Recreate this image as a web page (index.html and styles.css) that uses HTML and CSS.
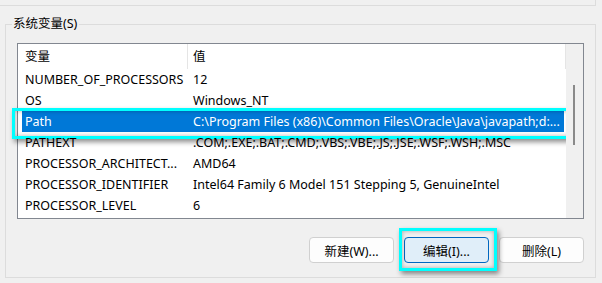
FILE: index.html
```html
<!DOCTYPE html>
<html lang="zh-CN">
<head>
  <meta charset="UTF-8" />
  <title>系统变量</title>
  <link rel="stylesheet" href="styles.css">
</head>
<body>

  <div class="top-panel"></div>

  <div class="group">
    <div class="group-title"><span>系统变量(S)</span></div>

    <div class="group-body">
      <div class="list">
        <div class="list-body">
          <div class="list-head">
            <span class="col-name">变量</span>
            <span class="col-value">值</span>
          </div>
          <div class="row"><span class="col-name">NUMBER_OF_PROCESSORS</span><span class="col-value">12</span></div>
          <div class="row"><span class="col-name">OS</span><span class="col-value">Windows_NT</span></div>
          <div class="row selected">
            <span class="col-name">Path</span><span class="col-value">C:\Program Files (x86)\Common Files\Oracle\Java\javapath;d:...</span>
            <span class="ring row-ring"></span>
          </div>
          <div class="row"><span class="col-name">PATHEXT</span><span class="col-value">.COM;.EXE;.BAT;.CMD;.VBS;.VBE;.JS;.JSE;.WSF;.WSH;.MSC</span></div>
          <div class="row"><span class="col-name">PROCESSOR_ARCHITECT...</span><span class="col-value">AMD64</span></div>
          <div class="row"><span class="col-name">PROCESSOR_IDENTIFIER</span><span class="col-value">Intel64 Family 6 Model 151 Stepping 5, GenuineIntel</span></div>
          <div class="row"><span class="col-name">PROCESSOR_LEVEL</span><span class="col-value">6</span></div>
        </div>
        <div class="scrollbar">
          <div class="thumb"></div>
        </div>
      </div>

      <div class="buttons">
        <button class="btn">新建(W)...</button>
        <span class="btn-wrap">
          <button class="btn default">编辑(I)...</button>
          <span class="ring btn-ring"></span>
        </span>
        <button class="btn">删除(L)</button>
      </div>
    </div>
  </div>

</body>
</html>
```

FILE: styles.css
```css
body {
  margin: 0;
  background: #f0f0f0;
  font-family: "Noto Sans", "Noto Sans CJK SC", sans-serif;
  font-size: 12.5px;
  color: #000;
}
.top-panel {
  width: 595px;
  height: 5px;
  border-bottom: 1px solid #dcdcdc;
  border-right: 1px solid #dcdcdc;
}
.group {
  margin: 10px 0 0 5px;
  width: 591px;
}
.group-title {
  display: flex;
  height: 16px;
  line-height: 16px;
  white-space: nowrap;
}
.group-title span {
  padding: 0 2px 0 1px;
}
.group-title::before,
.group-title::after {
  content: "";
  align-self: flex-end;
  height: 7px;
  border-top: 1px solid #dcdcdc;
}
.group-title::before {
  width: 6px;
  flex-shrink: 0;
  border-left: 1px solid #dcdcdc;
}
.group-title::after {
  flex: 1;
  border-right: 1px solid #dcdcdc;
}
.group-body {
  border: 1px solid #dcdcdc;
  border-top: none;
  padding: 11px 11px 14px;
}
.list {
  display: flex;
  height: 176px;
  box-sizing: border-box;
  border: 1px solid #828790;
  background: #fff;
}
.list-body {
  flex: 1;
  display: flex;
  flex-direction: column;
}
.list-head,
.row {
  display: flex;
  white-space: nowrap;
}
.list-head {
  height: 25px;
  line-height: 25px;
  border-right: 1px solid #e5e5e5;
}
.list-head .col-name {
  width: 162px;
  padding-left: 7px;
  border-right: 1px solid #e5e5e5;
}
.list-head .col-value {
  padding-left: 5px;
}
.row {
  position: relative;
  height: 21px;
  line-height: 21px;
  margin: 0 2px 0 4px;
}
.row .col-name {
  width: 162px;
  padding-left: 3px;
  overflow: hidden;
}
.row .col-value {
  padding-left: 6px;
}
.row.selected {
  background: #0078d7;
  color: #fff;
}
.scrollbar {
  width: 17px;
  background: #f0f0f0;
  position: relative;
}
.thumb {
  position: absolute;
  left: 7px;
  top: 41px;
  width: 2px;
  height: 60px;
  background: #8a8a8a;
}
.buttons {
  display: flex;
  justify-content: flex-end;
  gap: 10px;
  margin-top: 18px;
}
.btn {
  width: 85px;
  height: 26px;
  border: 1px solid #d0d0d0;
  border-radius: 4px;
  background: #fdfdfd;
  font-family: inherit;
  font-size: 12.5px;
  color: #000;
  padding: 0;
}
.btn.default {
  background: #e0eef9;
  border-color: #0067c0;
}
.btn-wrap {
  position: relative;
  display: flex;
}
.ring {
  position: absolute;
  border: 3px solid #00ffff;
  box-shadow: 2px 3px 5px rgba(0, 0, 0, 0.45), inset 0 0 4px rgba(0, 0, 0, 0.3);
  pointer-events: none;
}
.row-ring {
  left: -10px;
  right: -8px;
  top: -3px;
  bottom: -7px;
}
.btn-ring {
  left: -5px;
  right: -8px;
  top: -9px;
  bottom: -8px;
}
```
